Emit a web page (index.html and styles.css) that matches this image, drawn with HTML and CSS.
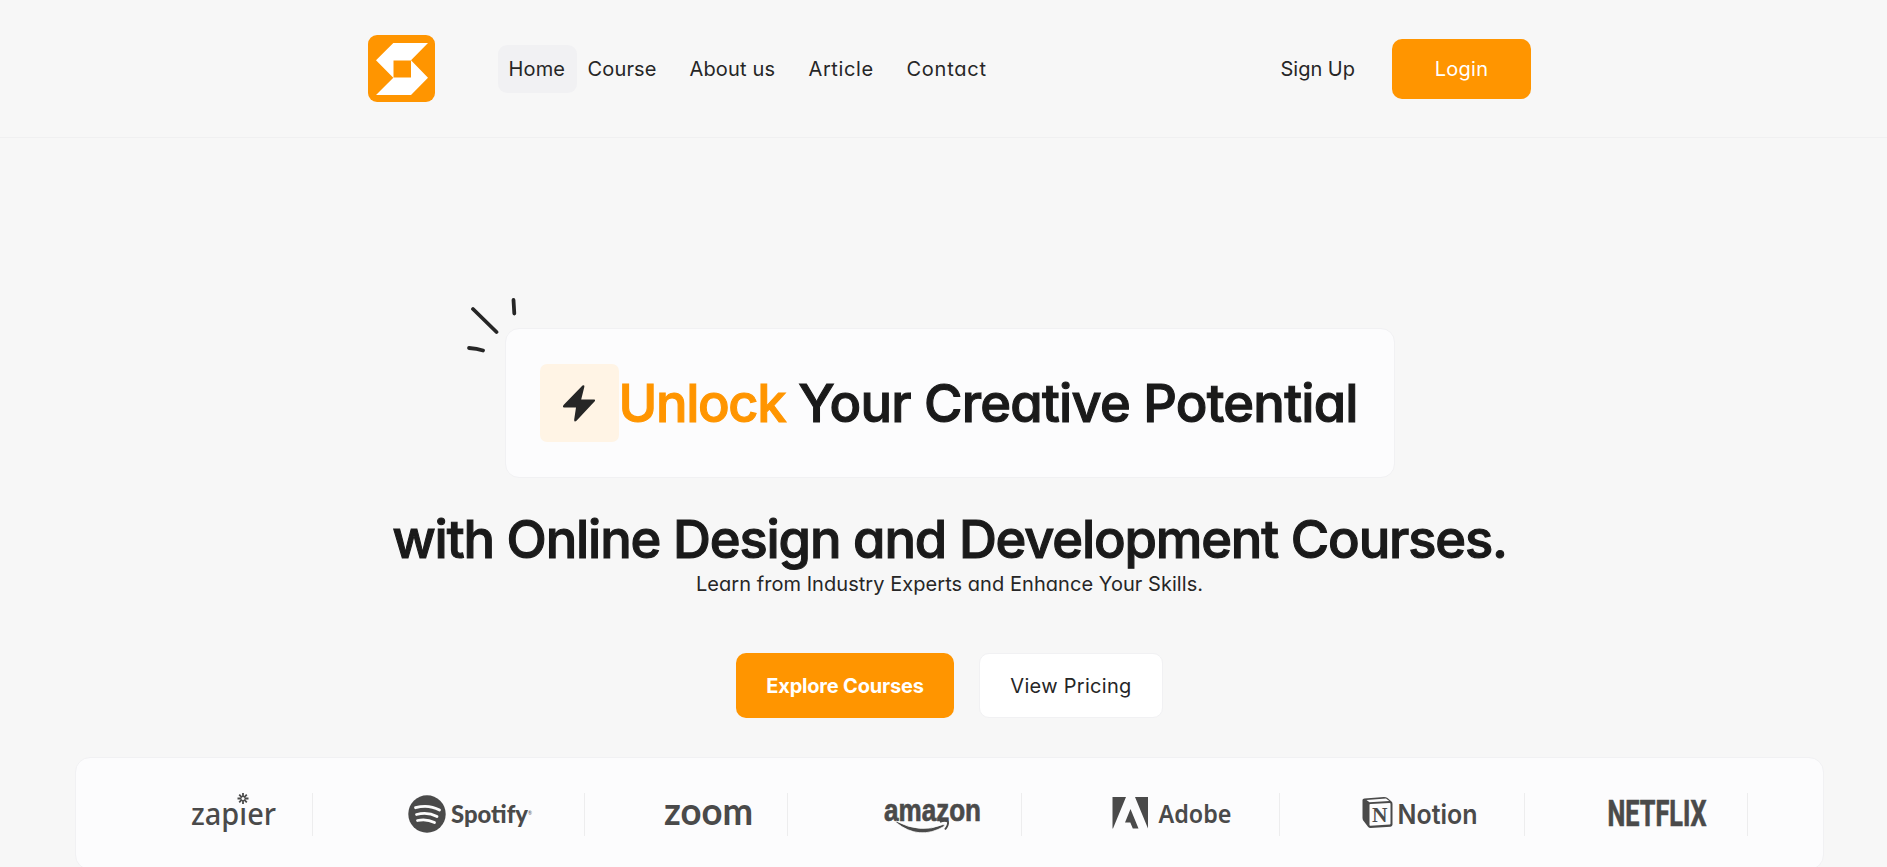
FILE: index.html
```html
<!DOCTYPE html>
<html lang="en">
<head>
<meta charset="utf-8">
<title>Online Design and Development Courses</title>
<link rel="stylesheet" href="styles.css">
</head>
<body>
<header class="header">
  <div class="header-inner">
    <a class="logo"><svg width="67" height="67" viewBox="0 0 67 67"><rect width="67" height="67" rx="9" fill="#ff9500"/><path fill="#fff" fill-rule="evenodd" d="M25.3 8H60L43 25.3 60 42.7 43 60H8L25.3 42.7 8 25.3ZM25.5 25.5V42.5H43V25.5Z"/></svg></a>
    <nav class="nav">
      <a class="nav-link home">Home</a><a class="nav-link course">Course</a><a class="nav-link about">About us</a><a class="nav-link article">Article</a><a class="nav-link contact">Contact</a>
    </nav>
    <div class="account"><a class="signup">Sign Up</a><a class="login">Login</a></div>
  </div>
</header>
<main class="hero">
  <div class="banner">
    <svg class="spark" width="52" height="56" viewBox="0 0 52 56"><path d="M6 11 29.500 34M46.500 2 47.300 15.500M2 50Q10 50.500 16 52.500" fill="none" stroke="#262626" stroke-width="3.800" stroke-linecap="round"/></svg>
    <span class="bolt"><svg width="32" height="37" viewBox="0 0 32 37"><path fill="#262626" d="M19.500.5Q21.800-.5 21.300 2L18.200 14.500H31Q33 14.500 31.500 16.500L13.500 35.800Q11 37.600 11.200 34.500L13 22.500H1Q-1 22.300.8 19.800Z"/></svg></span>
    <h1 class="title"><span class="accent">Unlock</span> Your Creative Potential</h1>
  </div>
  <h2 class="title second">with Online Design and Development Courses.</h2>
  <p class="lead">Learn from Industry Experts and Enhance Your Skills.</p>
  <div class="actions"><a class="btn primary">Explore Courses</a><a class="btn outline">View Pricing</a></div>
</main>
<section class="partners">
  <div class="partner zapier"><svg width="84" height="43" viewBox="0 0 84 43">
    <text x="-1" y="31.500" class="w-zapier" textLength="85" lengthAdjust="spacingAndGlyphs">zapıer</text>
    <path d="M51 0V11M45.500 5.500H56.500M47.200 1.700 54.800 9.300M54.800 1.700 47.200 9.300" stroke="#4a4a4a" stroke-width="1.800"/><circle cx="51" cy="5.500" r="1.500" fill="#fcfcfc"/></svg></div>
  <div class="partner spotify"><svg width="125" height="43" viewBox="0 0 125 43">
    <circle cx="18" cy="21" r="18.700" fill="#4a4a4a"/>
    <path d="M6.500 14.700Q19.500 11 30.500 17M7.500 21.500Q18.500 18.500 28 23.500M8.500 27.500Q17.500 25.500 25.500 29.500" fill="none" stroke="#fcfcfc" stroke-width="2.800" stroke-linecap="round"/>
    <text x="42" y="29.500" class="w-spotify" textLength="81" lengthAdjust="spacingAndGlyphs">Spotify<tspan class="w-reg" dy="-8">®</tspan></text></svg></div>
  <div class="partner zoom"><svg width="87" height="43" viewBox="0 0 87 43"><text x="-1" y="31.500" class="w-zoom" textLength="89" lengthAdjust="spacingAndGlyphs">zoom</text></svg></div>
  <div class="partner amazon"><svg width="97" height="43" viewBox="0 0 97 43"><text x="0" y="27.500" class="w-amazon" textLength="97" lengthAdjust="spacingAndGlyphs">amazon</text>
    <path fill="#4a4a4a" stroke="#fcfcfc" stroke-width=".8" d="M12 28Q36 41 59 31.500Q61.500 31 60 33.500Q35 48 12 29.500Z"/><path d="M56 29Q61 26.800 64 28.800Q64.500 32 61 36.500" fill="none" stroke="#4a4a4a" stroke-width="1.900"/></svg></div>
  <div class="partner adobe"><svg width="120" height="43" viewBox="0 0 120 43"><path fill="#4a4a4a" d="M.500 4H14L1 35.500H.500ZM23 4H36V35.500ZM18.500 16 26.500 35.500H20.800L18.300 29.500H13Z"/><text x="46.500" y="29.500" class="w-adobe" textLength="73" lengthAdjust="spacingAndGlyphs">Adobe</text></svg></div>
  <div class="partner notion"><svg width="115" height="43" viewBox="0 0 115 43"><path fill="#4a4a4a" fill-rule="evenodd" d="M1.500 5.500 21 4Q23 4 24.500 5L28.500 8.500Q29.500 9.300 29.500 11V31.500Q29.500 33.500 27.500 33.700L7.500 35Q6 35 5 33.800L1 28.500Q-.5 27 -.5 25V7Q-.5 5.700 1.500 5.500ZM3.500 7 6.500 9.200 26.300 8 23 5.500ZM6.500 11.500V32Q6.500 32.800 7.500 32.700L26.700 31.500Q27.500 31.400 27.500 30.500V10.800Q27.500 10 26.500 10L7.500 11Q6.500 11 6.500 11.500Z"/><text x="9" y="29" class="w-n" textLength="15.500" lengthAdjust="spacingAndGlyphs">N</text><text x="34.500" y="30.500" class="w-notion" textLength="80" lengthAdjust="spacingAndGlyphs">Notion</text></svg></div>
  <div class="partner netflix"><svg width="99" height="43" viewBox="0 0 99 43"><g transform="scale(1 1.34)"><text x="-.5" y="24.800" class="w-netflix" textLength="99" lengthAdjust="spacingAndGlyphs">NETFLIX</text></g></svg></div>
</section>
</body>
</html>
```
FILE: styles.css
```css
* { box-sizing: border-box; }
body { margin: 0; height: 867px; overflow: hidden; background: #f7f7f7; color: #262626; font: 20px/30px Inter, "Liberation Sans", sans-serif; font-feature-settings: "cv11" 1; }
.header { height: 138px; border-bottom: 1px solid #f0f0f1; }
.header-inner { width: 1163px; height: 137px; margin-left: 368px; display: flex; align-items: center; }
.logo { display: flex; width: 130px; }
.nav { display: flex; }
.nav-link { height: 48px; line-height: 49px; white-space: nowrap; padding-left: 10.5px; border-radius: 9px; letter-spacing: .15px; }
.home { width: 79px; background: #f1f1f3; }
.course { width: 102px; }
.about { width: 119px; }
.article { width: 98px; letter-spacing: .6px; }
.contact { width: 110px; letter-spacing: .75px; }
.account { margin-left: auto; display: flex; align-items: center; gap: 37px; }
.login { width: 139px; height: 60px; line-height: 60px; border-radius: 10px; background: #ff9500; color: #fff; text-align: center; letter-spacing: .3px; }
.hero { width: 1163px; margin: 190px 0 0 368px; display: flex; flex-direction: column; align-items: center; }
.banner { position: relative; width: 890px; height: 150px; display: flex; align-items: center; padding-left: 34px; border: 1px solid #f1f1f3; border-radius: 14px; background: #fcfcfd; }
.spark { position: absolute; left: -39px; top: -31px; }
.bolt { flex: none; width: 79px; height: 78px; display: flex; align-items: center; justify-content: center; border-radius: 7px; background: #fff4e5; }
.title { margin: 0; padding-top: 1px; font-size: 52.500px; line-height: 65px; font-weight: 500; color: #1a1a1a; white-space: nowrap; letter-spacing: -.78px; -webkit-text-stroke: 1.1px currentColor; }
.accent { color: #ff9500; letter-spacing: -1.4px; }
.second { margin-top: 28px; letter-spacing: -1.18px; }
.lead { margin: -3px 0 0; letter-spacing: .05px; }
.actions { display: flex; gap: 25px; margin-top: 54px; }
.btn { height: 65px; line-height: 66px; text-align: center; border-radius: 10px; white-space: nowrap; }
.primary { width: 218px; background: #ff9500; color: #fff; font-weight: 700; letter-spacing: -.2px; }
.outline { width: 184px; border: 1px solid #f1f1f3; background: #fff; line-height: 64px; letter-spacing: .3px; }
.partners { width: 1749px; height: 113px; margin: 39px 0 0 75px; padding-top: 35px; display: flex; border: 1px solid #f1f1f3; border-radius: 15px; background: #fcfcfd; }
.partner { height: 43px; border-right: 1px solid #ededee; }
.partner svg { display: block; overflow: visible; }
.partner text { fill: #4a4a4a; }
.zapier { width: 237px; padding-left: 116px; }
.spotify { width: 272px; padding-left: 96px; }
.zoom { width: 203px; padding-left: 80px; }
.amazon { width: 234px; padding-left: 96px; }
.adobe { width: 258px; padding-left: 90px; }
.notion { width: 245px; padding-left: 83px; }
.netflix { width: 223px; padding-left: 83px; }
.w-zapier { font: 500 31px "Noto Sans"; }
.w-spotify { font: 900 25px Lato; }
.w-reg { font: 5px Lato; }
.w-zoom { font: 700 38px Lato; }
.w-amazon { font: 700 32px "Liberation Sans"; stroke: #4a4a4a; stroke-width: .7px; }
.w-adobe { font: 600 26px "Noto Sans"; }
.w-n { font: 700 20px "Liberation Serif"; }
.w-notion { font: 600 27px Inter; }
.w-netflix { font: 700 27px Roboto; stroke: #4a4a4a; stroke-width: .5px; }
```
